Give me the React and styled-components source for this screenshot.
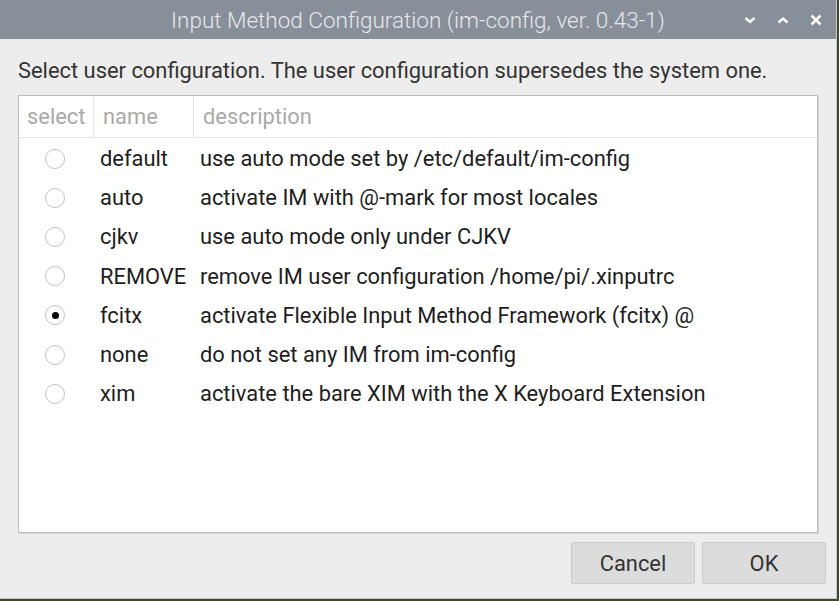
import React, { useState } from "react";
import styled, { createGlobalStyle } from "styled-components";

const GlobalStyle = createGlobalStyle`
  html, body {
    margin: 0;
    padding: 0;
    background: #3f4a2c;
    font-family: Roboto, "Noto Sans", "Liberation Sans", sans-serif;
  }
`;

const Window = styled.div`
  width: 837px;
  height: 599px;
  background: #ededed;
  display: flex;
  flex-direction: column;
  box-sizing: border-box;
  border-right: 1px solid #c8c8c8;
  border-bottom: 1px solid #c8c8c8;
`;

const TitleBar = styled.div`
  height: 39px;
  flex-shrink: 0;
  background: #878f99;
  display: flex;
  align-items: center;
  position: relative;
`;

const Title = styled.div`
  flex: 1;
  text-align: center;
  color: #e6e8eb;
  font-size: 22.5px;
  font-weight: 300;
  margin-right: 0;
`;

const Controls = styled.div`
  position: absolute;
  right: 12px;
  top: 0;
  height: 39px;
  display: flex;
  align-items: center;
  gap: 17px;
`;

const ControlIcon = styled.svg`
  width: 16px;
  height: 16px;
  display: block;
`;

const Body = styled.div`
  flex: 1;
  display: flex;
  flex-direction: column;
  padding: 18px 18px 0 18px;
`;

const Intro = styled.div`
  font-size: 21.9px;
  color: #333;
  height: 38px;
  line-height: 28px;
`;

const TableBox = styled.div`
  height: 438px;
  background: #fff;
  border: 1px solid #bdbdbd;
  box-shadow: 1px 1px 0 #d4d4d4;
  box-sizing: border-box;
`;

const HeaderRow = styled.div`
  display: grid;
  grid-template-columns: 75px 100px 1fr;
  height: 41px;
  border-bottom: 1px solid #e6e6e6;
`;

const HeaderCell = styled.div`
  display: flex;
  align-items: center;
  padding-left: ${(p) => (p.$first ? "8px" : "9px")};
  color: #a9a9a9;
  font-size: 21.9px;
  border-right: ${(p) => (p.$last ? "none" : "1px solid #e3e3e3")};
`;

const Rows = styled.div`
  padding-top: 1px;
`;

const Row = styled.div`
  display: grid;
  grid-template-columns: 81px 100px 1fr;
  height: 39.2px;
  align-items: center;
  font-size: 21.9px;
  color: #1e1e1e;
  cursor: default;
`;

const RadioCell = styled.div`
  display: flex;
  justify-content: center;
  padding-right: 9px;
`;

const Radio = styled.span`
  width: 20px;
  height: 20px;
  border-radius: 50%;
  border: 1.5px solid #c2c2c2;
  box-sizing: border-box;
  display: flex;
  align-items: center;
  justify-content: center;
  &::after {
    content: "";
    width: 7px;
    height: 7px;
    border-radius: 50%;
    background: #000;
    display: ${(p) => (p.$checked ? "block" : "none")};
  }
`;

const NameCell = styled.div`
  white-space: nowrap;
`;

const DescCell = styled.div`
  white-space: nowrap;
`;

const Footer = styled.div`
  display: flex;
  justify-content: flex-end;
  gap: 7px;
  padding: 9px 10px 0 0;
  margin-right: -18px;
`;

const Button = styled.button`
  width: 124px;
  height: 42px;
  background: #dcdcdc;
  border: 1px solid #cbcbcb;
  border-radius: 2px;
  font-family: inherit;
  font-size: 21.9px;
  color: #333;
  padding: 0;
`;

const items = [
  ["default", "use auto mode set by /etc/default/im-config"],
  ["auto", "activate IM with @-mark for most locales"],
  ["cjkv", "use auto mode only under CJKV"],
  ["REMOVE", "remove IM user configuration /home/pi/.xinputrc"],
  ["fcitx", "activate Flexible Input Method Framework (fcitx) @"],
  ["none", "do not set any IM from im-config"],
  ["xim", "activate the bare XIM with the X Keyboard Extension"],
];

const App = () => {
  const [selected, setSelected] = useState("fcitx");
  return (
    <>
      <GlobalStyle />
      <Window>
        <TitleBar>
          <Title>Input Method Configuration (im-config, ver. 0.43-1)</Title>
          <Controls>
            <ControlIcon viewBox="0 0 16 16">
              <path d="M3.5 6 L8 10 L12.5 6" fill="none" stroke="#fff" strokeWidth="2.4" />
            </ControlIcon>
            <ControlIcon viewBox="0 0 16 16">
              <path d="M3.5 10.5 L8 6.5 L12.5 10.5" fill="none" stroke="#fff" strokeWidth="2.4" />
            </ControlIcon>
            <ControlIcon viewBox="0 0 16 16">
              <path d="M3.5 3.5 L12.5 12.5 M12.5 3.5 L3.5 12.5" fill="none" stroke="#fff" strokeWidth="2.6" />
            </ControlIcon>
          </Controls>
        </TitleBar>
        <Body>
          <Intro>
            Select user configuration. The user configuration supersedes the system one.
          </Intro>
          <TableBox>
            <HeaderRow>
              <HeaderCell $first>select</HeaderCell>
              <HeaderCell>name</HeaderCell>
              <HeaderCell $last>description</HeaderCell>
            </HeaderRow>
            <Rows>
              {items.map(([name, desc]) => (
                <Row key={name} onClick={() => setSelected(name)}>
                  <RadioCell>
                    <Radio $checked={selected === name} />
                  </RadioCell>
                  <NameCell>{name}</NameCell>
                  <DescCell>{desc}</DescCell>
                </Row>
              ))}
            </Rows>
          </TableBox>
          <Footer>
            <Button>Cancel</Button>
            <Button>OK</Button>
          </Footer>
        </Body>
      </Window>
    </>
  );
};

export default App;
